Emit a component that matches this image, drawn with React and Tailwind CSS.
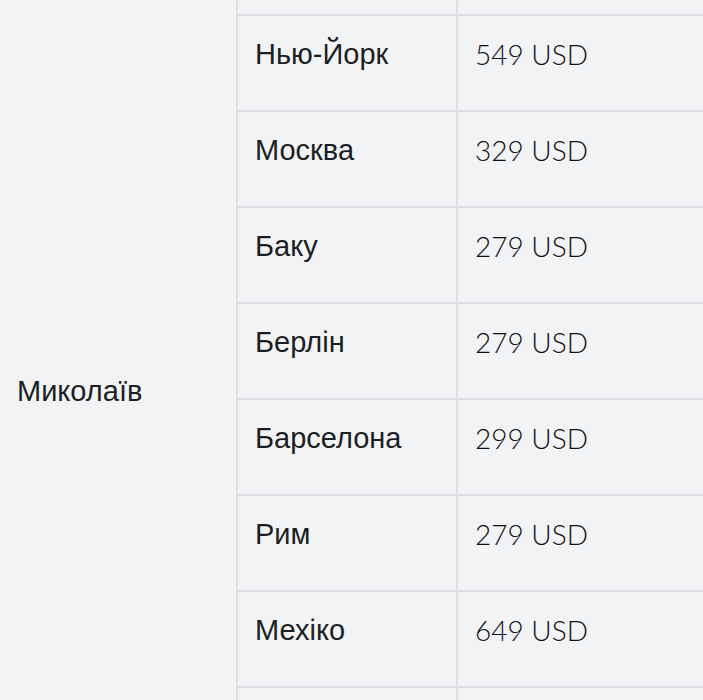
export default function App() {
  const rows = [
    ["", ""],
    ["Нью-Йорк", "549 USD"],
    ["Москва", "329 USD"],
    ["Баку", "279 USD"],
    ["Берлін", "279 USD"],
    ["Барселона", "299 USD"],
    ["Рим", "279 USD"],
    ["Мехіко", "649 USD"],
    ["", ""],
  ];
  return (
    <div className="w-[703px] h-[700px] overflow-hidden bg-[#f2f3f5] text-[#1c1f24]">
      <div className="flex -mt-[82px]">
        <div className="w-[236px] shrink-0 pt-[452px] px-[17px]">
          <span className="text-[29px] leading-[42px] font-['Liberation_Sans',Arial,sans-serif]">Миколаїв</span>
        </div>
        <div className="flex-1 border-l-2 border-[#dcdee1]">
          {rows.map(([city, price], i) => (
            <div key={i} className={`flex h-[96px] ${i > 0 ? "border-t-2 border-[#dcdee1]" : ""}`}>
              <div className="w-[220px] shrink-0 border-r-2 border-[#dcdee1] px-[17px] pt-[17px]">
                <span className="text-[29px] leading-[42px] font-['Liberation_Sans',Arial,sans-serif]">{city}</span>
              </div>
              <div className="flex-1 px-[17px] pt-[17px]">
                <span className="text-[28px] leading-[42px] font-light text-[#0e1014] font-['Lato',sans-serif]">{price}</span>
              </div>
            </div>
          ))}
        </div>
      </div>
    </div>
  );
}
